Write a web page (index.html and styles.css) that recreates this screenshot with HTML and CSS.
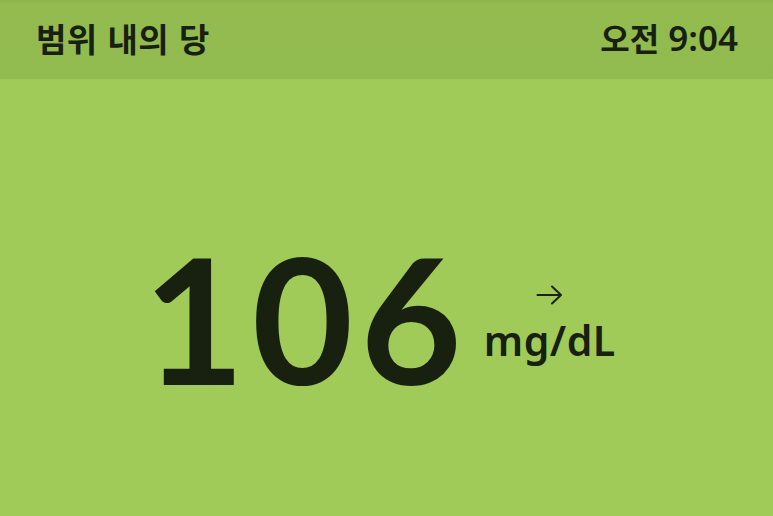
FILE: index.html
```html
<!DOCTYPE html>
<html lang="ko">
<head>
<meta charset="utf-8">
<link rel="stylesheet" href="styles.css">
</head>
<body>
<div class="screen">
  <header class="bar">
    <div class="title">범위 내의 당</div>
    <div class="time"><span class="ampm">오전</span> 9:04</div>
  </header>
  <main class="main">
    <div class="reading">
      <div class="value">106</div>
      <div class="side">
        <svg class="arrow" width="27" height="20" viewBox="0 0 27 20" aria-hidden="true">
          <path d="M1.5 10 H25 M16 1.5 L25 10 L16 18.5" fill="none" stroke="#1a2210" stroke-width="2" stroke-linecap="round" stroke-linejoin="round"/>
        </svg>
        <div class="unit">mg/dL</div>
      </div>
    </div>
  </main>
</div>
</body>
</html>
```
FILE: styles.css
```css
html, body {
  margin: 0;
  padding: 0;
}
body {
  width: 773px;
  height: 516px;
  overflow: hidden;
  background: #a0cb58;
  color: #182010;
  font-family: "Noto Sans", "Noto Sans CJK KR", sans-serif;
}
.screen {
  display: flex;
  flex-direction: column;
  height: 516px;
}
.bar {
  height: 79px;
  flex: 0 0 79px;
  background: linear-gradient(#8bb44b 0, #93bb4f 4px, #92bb4f 100%);
  display: flex;
  align-items: center;
  justify-content: space-between;
  padding: 0 35px 0 36px;
  box-sizing: border-box;
}
.title {
  font-family: "Noto Sans CJK KR", sans-serif;
  font-weight: 700;
  font-size: 33px;
  letter-spacing: 0.5px;
  margin-top: -4px;
}
.time {
  font-family: "Noto Sans", "Noto Sans CJK KR", sans-serif;
  font-weight: 600;
  font-size: 35px;
  margin-top: -4px;
}
.ampm {
  font-family: "Noto Sans CJK KR", sans-serif;
  font-weight: 700;
  font-size: 32px;
}
.main {
  flex: 1;
  display: flex;
  justify-content: center;
  align-items: center;
  padding-top: 40px;
  box-sizing: border-box;
}
.reading {
  display: flex;
  align-items: flex-end;
  gap: 15px;
  margin-right: 14px;
}
.value {
  font-family: Lato, "Noto Sans", sans-serif;
  font-size: 175px;
  font-weight: 700;
  line-height: 1;
  letter-spacing: 7px;
}
.side {
  display: flex;
  flex-direction: column;
  align-items: center;
  padding-bottom: 44px;
}
.arrow {
  display: block;
  margin-bottom: 15px;
}
.unit {
  font-size: 41px;
  font-weight: 600;
  line-height: 1;
  letter-spacing: 0.5px;
}
```
